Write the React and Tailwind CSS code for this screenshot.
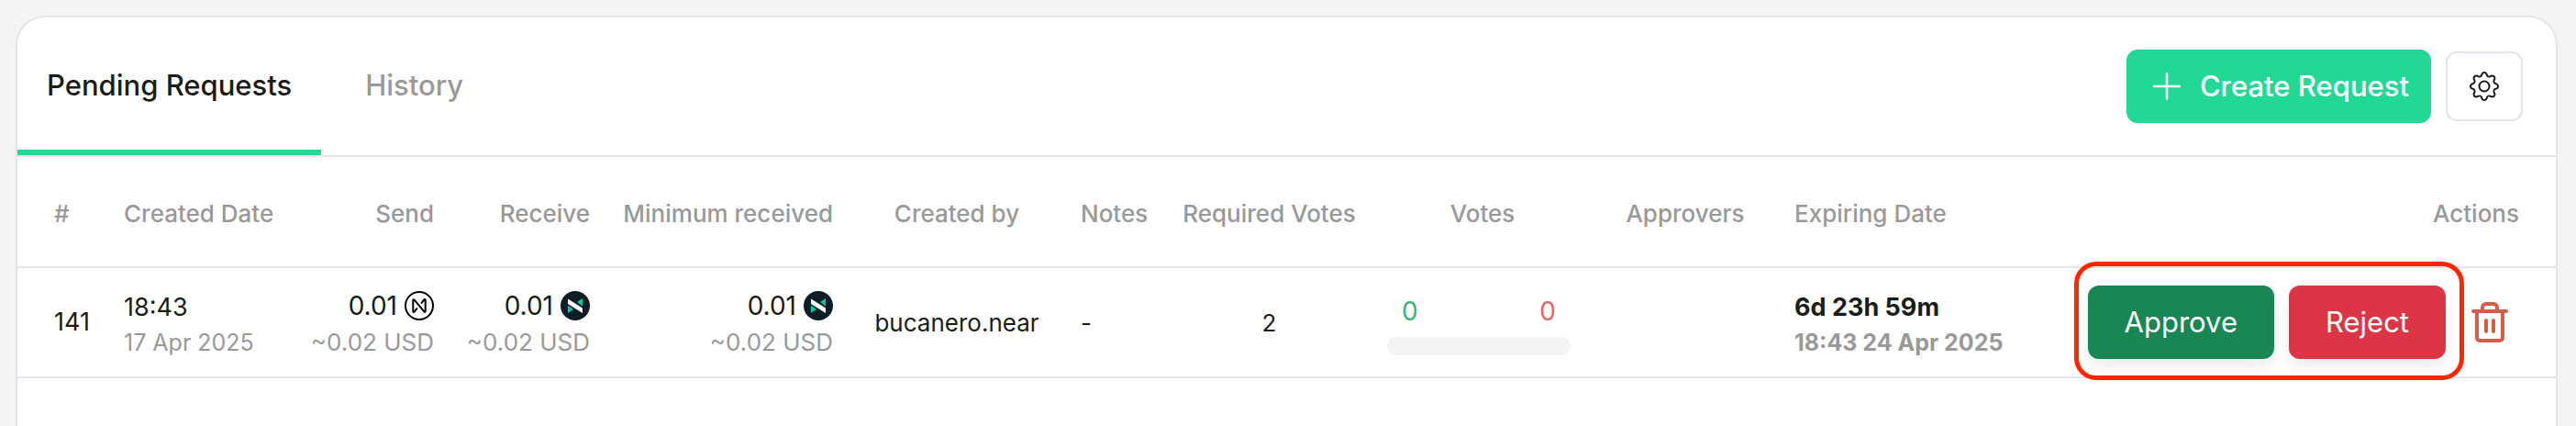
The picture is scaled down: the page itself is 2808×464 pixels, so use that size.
import React, { useState } from "react";
import { BsGear, BsPlusLg } from "react-icons/bs";

const TABS = [
  { id: "pending", label: "Pending Requests" },
  { id: "history", label: "History" },
];

// Table columns, the last one takes the space that is left
const COLUMNS = [
  { label: "#", width: "w-[96px]", className: "pl-10 text-left" },
  { label: "Created Date", width: "w-[206px]", className: "px-5 text-left" },
  { label: "Send", width: "w-[172px]", className: "pr-5 text-right" },
  { label: "Receive", width: "w-[170px]", className: "pr-5 text-right" },
  { label: "Minimum received", width: "w-[265px]", className: "pr-5 text-right" },
  { label: "Created by", width: "w-[230px]", className: "px-5 text-center" },
  { label: "Notes", width: "w-[111px]", className: "pl-5 text-left" },
  { label: "Required Votes", width: "w-[229px]", className: "px-4 text-center" },
  { label: "Votes", width: "w-[236px]", className: "px-4 text-center" },
  { label: "Approvers", width: "w-[206px]", className: "px-4 text-center" },
  { label: "Expiring Date", width: "w-[282px]", className: "px-4 text-left" },
  { label: "Actions", width: "w-auto", className: "pr-10 text-right" },
];

const REQUESTS = [
  {
    id: 141,
    time: "18:43",
    date: "17 Apr 2025",
    send: { amount: "0.01", usd: "~0.02 USD", token: "near" },
    receive: { amount: "0.01", usd: "~0.02 USD", token: "wnear" },
    minimum: { amount: "0.01", usd: "~0.02 USD", token: "wnear" },
    createdBy: "bucanero.near",
    notes: "-",
    requiredVotes: 2,
    approved: 0,
    rejected: 0,
    expiresIn: "6d 23h 59m",
    expiresAt: "18:43 24 Apr 2025",
  },
];

const NearIcon = () => (
  <svg className="size-8 shrink-0" viewBox="0 0 32 32" fill="none">
    <circle cx="16" cy="16" r="15" stroke="#000" strokeWidth="2" />
    <path
      d="M18.6 13 21.300 9.400q1.400-1.200 1.400.6v12q0 1.400-1.400.4L10.700 9.600q-1.400-1-1.400.4v12q0 1.800 1.400.6l2.700-3.600"
      stroke="#000"
      strokeWidth="2"
      strokeLinecap="round"
      strokeLinejoin="round"
    />
  </svg>
);

const WrappedNearIcon = () => (
  <svg className="size-8 shrink-0" viewBox="0 0 32 32">
    <circle cx="16" cy="16" r="16" fill="#0f1d27" />
    <path d="M24 8v8.500l-6-4.500zM8 24v-8.500l6 4.500z" fill="#00c8a2" />
    <path d="M8 8.500 24 18.500v5.500L8 14z" fill="#fff" />
  </svg>
);

const TrashIcon = () => (
  <svg
    className="size-12"
    viewBox="0 0 48 48"
    fill="none"
    stroke="currentColor"
    strokeWidth="4"
    strokeLinecap="round"
    strokeLinejoin="round">
    <path d="M6 12h36M10 12v29a3 3 0 0 0 3 3h22a3 3 0 0 0 3-3V12M16 12V8a4 4 0 0 1 4-4h8a4 4 0 0 1 4 4v4M20 22v12M28 22v12" />
  </svg>
);

const TokenAmount = ({ amount, usd, token }) => (
  <div className="flex flex-col items-end whitespace-nowrap">
    <div className="flex items-center gap-2 text-[28px] leading-10">
      {amount}
      {token === "near" ? <NearIcon /> : <WrappedNearIcon />}
    </div>
    <div className="leading-10 text-[#999999]">{usd}</div>
  </div>
);

const Votes = ({ approved, rejected }) => (
  <div className="w-[200px]">
    <div className="flex justify-between px-4 text-[28px] leading-10">
      <span className="text-[#3cb179]">{approved}</span>
      <span className="text-[#e5646a]">{rejected}</span>
    </div>
    <div className="mt-2 h-5 rounded-full bg-[#f4f4f4]" />
  </div>
);

const RequestRow = ({ request }) => (
  <tr className="h-[120px] border-b-2 border-[#e2e6ec]">
    <td className="pl-10 text-[27px]">{request.id}</td>
    <td className="px-5 pt-1">
      <div className="text-[27px] leading-10">{request.time}</div>
      <div className="text-[25px] leading-9 text-[#999999]">{request.date}</div>
    </td>
    <td className="pt-1 pr-5">
      <TokenAmount {...request.send} />
    </td>
    <td className="pt-1 pr-5">
      <TokenAmount {...request.receive} />
    </td>
    <td className="pt-1 pr-5">
      <TokenAmount {...request.minimum} />
    </td>
    <td className="text-center">{request.createdBy}</td>
    <td className="pl-5">{request.notes}</td>
    <td className="px-4 text-center">{request.requiredVotes}</td>
    <td className="px-3.5 pt-1">
      <Votes approved={request.approved} rejected={request.rejected} />
    </td>
    <td />
    <td className="px-4 pt-1 font-bold">
      <div className="text-[27px] leading-10">{request.expiresIn}</div>
      <div className="text-[25px] leading-9 text-[#999999]">
        {request.expiresAt}
      </div>
    </td>
    <td className="pr-12">
      <div className="flex items-center justify-end gap-6">
        <div className="relative flex gap-4 text-[31px] text-white">
          <button className="h-20 rounded-xl bg-[#198754] px-10 shadow-[0_8px_16px_rgba(0,0,0,0.08)]">
            Approve
          </button>
          <button className="h-20 rounded-xl bg-[#dc3545] px-10 shadow-[0_8px_16px_rgba(0,0,0,0.08)]">
            Reject
          </button>
          <div className="pointer-events-none absolute -top-[26px] -right-5 -bottom-[23px] -left-[15px] rounded-3xl border-5 border-[#ff2600]" />
        </div>
        <button aria-label="Delete request" className="text-[#d95c4a]">
          <TrashIcon />
        </button>
      </div>
    </td>
  </tr>
);

function App() {
  const [activeTab, setActiveTab] = useState("pending");

  return (
    <div className="min-h-screen bg-[#f4f4f4] pt-[17px] pr-5 pl-[17px] font-['Inter',sans-serif] text-[#1b1b18]">
      <main className="min-h-[calc(100vh-17px)] rounded-t-[32px] border-2 border-b-0 border-[#e2e6ec] bg-white">
        <div className="flex items-stretch justify-between border-b-2 border-[#e2e6ec]">
          <div className="flex gap-4 text-[31px] font-medium">
            {TABS.map((tab) => (
              <button
                key={tab.id}
                onClick={() => setActiveTab(tab.id)}
                className={`h-[150px] border-b-6 px-8 pt-1 ${
                  activeTab === tab.id
                    ? "border-[#22d895]"
                    : "border-transparent text-[#999999]"
                }`}>
                {tab.label}
              </button>
            ))}
          </div>
          <div className="flex items-center gap-4 pr-9">
            <button className="flex h-20 items-center gap-4 rounded-xl bg-[#22d895] px-6 text-[31px] font-medium text-white">
              <BsPlusLg className="size-10" />
              Create Request
            </button>
            <button
              aria-label="Settings"
              className="flex h-[76px] w-[84px] items-center justify-center rounded-xl border-2 border-[#e2e6ec]">
              <BsGear className="size-8" />
            </button>
          </div>
        </div>

        <table className="w-full table-fixed text-[26px]">
          <thead>
            <tr className="h-[120px] border-b-2 border-[#e2e6ec] text-[#999999]">
              {COLUMNS.map(({ label, width, className }) => (
                <th
                  key={label}
                  className={`pt-1 font-medium whitespace-nowrap ${width} ${className}`}>
                  {label}
                </th>
              ))}
            </tr>
          </thead>
          <tbody>
            {REQUESTS.map((request) => (
              <RequestRow key={request.id} request={request} />
            ))}
          </tbody>
        </table>
      </main>
    </div>
  );
}

export default App;
